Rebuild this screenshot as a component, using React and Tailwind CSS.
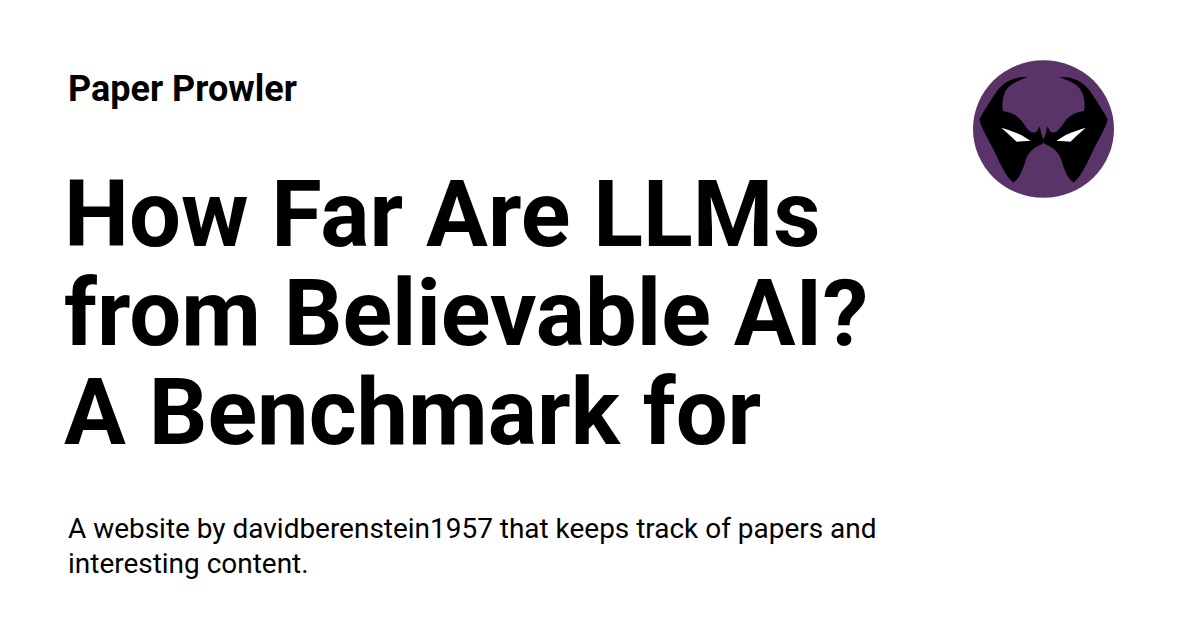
const MASK =
  "M204 78C175 76 145 84 124 105C108 122 90 150 58 205C65 235 82 258 100 295C115 325 135 375 160 395C178 385 190 355 198 325C206 303 222 290 237 284L251 276L251 264C246 258 243 245 241 231C239 226 236 228 234 236C230 245 222 246 214 243C204 238 198 226 189 215C178 198 160 184 129 180C124 150 132 122 146 108C160 94 184 86 204 78Z";
const EYE = "M124 230C150 238 172 246 184 252C194 258 204 264 212 270C196 270 180 272 170 272C156 258 140 244 124 230Z";

const Logo = () => (
  <svg viewBox="39 27 424 414" className="w-[141px] h-[138px] shrink-0">
    <ellipse cx="251" cy="234" rx="212" ry="207" fill="#5a3468" />
    <path d={MASK} fill="#000" />
    <path d={EYE} fill="#fff" />
    <g transform="translate(502 0) scale(-1 1)">
      <path d={MASK} fill="#000" />
      <path d={EYE} fill="#fff" />
    </g>
  </svg>
);

export default function App() {
  return (
    <div className="w-[1200px] h-[630px] bg-white text-black font-['Roboto',sans-serif] flex justify-between overflow-hidden pl-[68px] pr-[86px] pt-[60px]">
      <div className="w-[830px] flex flex-col">
        <div className="text-[36px] leading-[58px] font-bold">Paper Prowler</div>
        <h1 className="mt-[47px] text-[92px] leading-[99px] font-bold -ml-[4px]">
          How Far Are LLMs from Believable AI? A Benchmark for
        </h1>
        <p className="mt-[49px] text-[27.96px] leading-[35px]">
          A website by davidberenstein1957 that keeps track of papers and interesting content.
        </p>
      </div>
      <Logo />
    </div>
  );
}
